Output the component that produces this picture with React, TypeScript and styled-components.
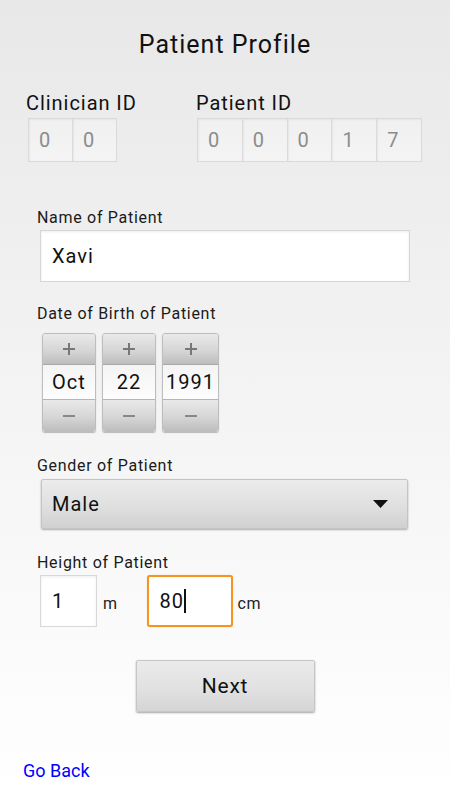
import React from "react";
import styled, { createGlobalStyle } from "styled-components";

const Global = createGlobalStyle`
  html, body { margin: 0; padding: 0; }
  body { font-family: Roboto, "Noto Sans", Arial, sans-serif; color: #111; }
`;

const Page = styled.div`
  width: 450px;
  height: 800px;
  box-sizing: border-box;
  background: linear-gradient(180deg, #e8e8e8 0%, #f6f6f6 60%, #ffffff 100%);
  display: flex;
  flex-direction: column;
  overflow: hidden;
`;

const Title = styled.h1`
  margin: 30px 0 0;
  font-size: 25px;
  line-height: 30px;
  font-weight: 400;
  letter-spacing: 1px;
  text-align: center;
  color: #111;
`;

const IdRow = styled.div`
  display: flex;
  margin-top: 31px;
  padding-left: 26px;
`;

const IdGroup = styled.div<{ $w?: number }>`
  display: flex;
  flex-direction: column;
  gap: 3px;
  width: ${(p) => (p.$w ? `${p.$w}px` : "auto")};
`;

const IdLabel = styled.div`
  font-size: 20px;
  line-height: 24px;
  letter-spacing: 0.95px;
  color: #111;
`;

const Boxes = styled.div<{ $indent: number }>`
  display: flex;
  margin-left: ${(p) => p.$indent}px;
`;

const DigitBox = styled.div<{ $w: number }>`
  width: ${(p) => p.$w}px;
  height: 44px;
  box-sizing: border-box;
  border: 1px solid #dadada;
  margin-left: -1px;
  background: linear-gradient(180deg, #f0f0f0, #f4f4f4);
  box-shadow: inset 1px 1px 2px rgba(0,0,0,0.05);
  display: flex;
  align-items: center;
  padding-left: 10px;
  font-size: 20px;
  letter-spacing: 1px;
  color: #8c8c8c;
  &:first-child { margin-left: 0; }
`;

const Form = styled.div`
  display: flex;
  flex-direction: column;
  padding-left: 37px;
`;

const FieldLabel = styled.div<{ $top: number; $gap: number }>`
  margin-top: ${(p) => p.$top}px;
  margin-bottom: ${(p) => p.$gap}px;
  font-size: 16px;
  line-height: 20px;
  letter-spacing: 0.7px;
  color: #1a1a1a;
`;

const TextInput = styled.div`
  margin-left: 3px;
  width: 370px;
  height: 52px;
  box-sizing: border-box;
  background: #fff;
  border: 1px solid #d6d6d6;
  box-shadow: inset 0 1px 3px rgba(0,0,0,0.08);
  display: flex;
  align-items: center;
  padding-left: 11px;
  font-size: 20px;
  letter-spacing: 1px;
  color: #111;
`;

const PickerRow = styled.div`
  display: flex;
  gap: 6px;
  margin-left: 5px;
`;

const Picker = styled.div<{ $w: number }>`
  width: ${(p) => p.$w}px;
  height: 99px;
  box-sizing: border-box;
  display: flex;
  flex-direction: column;
  border: 1px solid #bdbdbd;
  border-radius: 3px;
  box-shadow: 0 1px 1px rgba(0,0,0,0.25);
  overflow: hidden;
`;

const PickBtn = styled.div<{ $h: number }>`
  height: ${(p) => p.$h}px;
  display: flex;
  align-items: center;
  justify-content: center;
  background: linear-gradient(180deg, #e9e9e9 0%, #d6d6d6 55%, #bdbdbd 100%);
`;

const PickValue = styled.div`
  height: 37px;
  display: flex;
  align-items: center;
  justify-content: center;
  background: linear-gradient(180deg, #f4f4f4, #fdfdfd);
  border-top: 1px solid #a8a8a8;
  border-bottom: 1px solid #b5b5b5;
  box-sizing: border-box;
  font-size: 20px;
  letter-spacing: 1px;
  color: #111;
`;

const Glyph = styled.svg`
  width: 14px;
  height: 14px;
`;

const Select = styled.div`
  margin-left: 4px;
  width: 367px;
  height: 50px;
  box-sizing: border-box;
  border: 1px solid #c4c4c4;
  border-radius: 2px;
  background: linear-gradient(180deg, #ececec 0%, #dedede 60%, #d0d0d0 100%);
  box-shadow: 0 1px 2px rgba(0,0,0,0.3);
  display: flex;
  align-items: center;
  justify-content: space-between;
  padding: 0 19px 0 10px;
  font-size: 20px;
  letter-spacing: 1px;
  color: #111;
`;

const Caret = styled.svg`
  width: 15px;
  height: 8px;
`;

const HeightRow = styled.div`
  display: flex;
  align-items: center;
  margin-left: 3px;
`;

const SmallInput = styled.div<{ $w: number; $focus?: boolean }>`
  width: ${(p) => p.$w}px;
  height: 52px;
  box-sizing: border-box;
  background: #fff;
  border: ${(p) => (p.$focus ? "2px solid #f7941e" : "1px solid #d8d8d8")};
  border-radius: ${(p) => (p.$focus ? "3px" : "0")};
  box-shadow: ${(p) => (p.$focus ? "0 0 1px rgba(247,148,30,0.6)" : "inset 0 1px 3px rgba(0,0,0,0.07)")};
  display: flex;
  align-items: center;
  padding-left: 11px;
  font-size: 20px;
  letter-spacing: 1px;
  color: #111;
`;

const Cursor = styled.span`
  display: inline-block;
  width: 1.5px;
  height: 24px;
  background: #111;
`;

const Unit = styled.span<{ $ml: number; $mr: number }>`
  margin-left: ${(p) => p.$ml}px;
  margin-right: ${(p) => p.$mr}px;
  font-size: 16px;
  letter-spacing: 0.5px;
  color: #222;
  padding-top: 4px;
`;

const NextButton = styled.button`
  align-self: center;
  margin-top: 33px;
  width: 179px;
  height: 52px;
  border: 1px solid #c6c6c6;
  border-radius: 2px;
  background: linear-gradient(180deg, #ebebeb 0%, #e0e0e0 60%, #d5d5d5 100%);
  box-shadow: 0 1px 2px rgba(0,0,0,0.35);
  font-family: Roboto, sans-serif;
  font-size: 21px;
  letter-spacing: 0.8px;
  color: #111;
  padding: 0;
`;

const BackLink = styled.a`
  margin: 48px 0 0 23px;
  font-size: 18px;
  line-height: 22px;
  color: #0000ff;
  text-decoration: none;
  align-self: flex-start;
`;

const Plus = () => (
  <Glyph viewBox="0 0 14 14">
    <path d="M7 1v12M1 7h12" stroke="#777" strokeWidth="2" />
  </Glyph>
);
const Minus = () => (
  <Glyph viewBox="0 0 14 14">
    <path d="M1 7h12" stroke="#888" strokeWidth="2" />
  </Glyph>
);

const DatePicker = ({ value, w }: { value: string; w: number }) => (
  <Picker $w={w}>
    <PickBtn $h={30}><Plus /></PickBtn>
    <PickValue>{value}</PickValue>
    <PickBtn $h={31}><Minus /></PickBtn>
  </Picker>
);

export default function App() {
  return (
    <Page>
      <Global />
      <Title>Patient Profile</Title>
      <IdRow>
        <IdGroup $w={170}>
          <IdLabel>Clinician ID</IdLabel>
          <Boxes $indent={2}>
            {["0", "0"].map((d, i) => (
              <DigitBox key={i} $w={45}>{d}</DigitBox>
            ))}
          </Boxes>
        </IdGroup>
        <IdGroup>
          <IdLabel>Patient ID</IdLabel>
          <Boxes $indent={1}>
            {["0", "0", "0", "1", "7"].map((d, i) => (
              <DigitBox key={i} $w={45.8}>{d}</DigitBox>
            ))}
          </Boxes>
        </IdGroup>
      </IdRow>
      <Form>
        <FieldLabel $top={46} $gap={2}>Name of Patient</FieldLabel>
        <TextInput>Xavi</TextInput>
        <FieldLabel $top={22} $gap={9}>Date of Birth of Patient</FieldLabel>
        <PickerRow>
          <DatePicker value="Oct" w={54} />
          <DatePicker value="22" w={54} />
          <DatePicker value="1991" w={57} />
        </PickerRow>
        <FieldLabel $top={24} $gap={3}>Gender of Patient</FieldLabel>
        <Select>
          <span>Male</span>
          <Caret viewBox="0 0 15 8">
            <path d="M0 0h15L7.5 8z" fill="#111" />
          </Caret>
        </Select>
        <FieldLabel $top={24} $gap={2}>Height of Patient</FieldLabel>
        <HeightRow>
          <SmallInput $w={57}>1</SmallInput>
          <Unit $ml={6} $mr={29}>m</Unit>
          <SmallInput $w={86} $focus>80<Cursor /></SmallInput>
          <Unit $ml={5} $mr={0}>cm</Unit>
        </HeightRow>
      </Form>
      <NextButton>Next</NextButton>
      <BackLink href="#">Go Back</BackLink>
    </Page>
  );
}
